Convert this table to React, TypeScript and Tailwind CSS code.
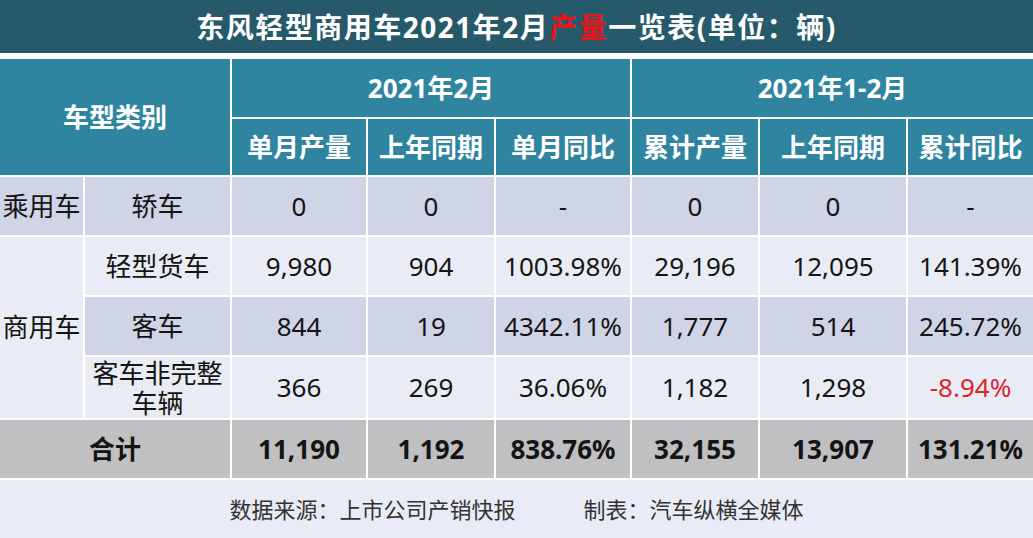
import React from "react";

// 东风轻型商用车 2021年2月 产量一览表

const font = "font-['Noto_Sans','Noto_Sans_CJK_SC',sans-serif]";

type Row = {
  name: string;
  values: string[];
  dark: boolean;
  wrap?: boolean;
};

const commercial: Row[] = [
  { name: "轻型货车", values: ["9,980", "904", "1003.98%", "29,196", "12,095", "141.39%"], dark: false },
  { name: "客车", values: ["844", "19", "4342.11%", "1,777", "514", "245.72%"], dark: true },
  { name: "客车非完整车辆", values: ["366", "269", "36.06%", "1,182", "1,298", "-8.94%"], dark: false, wrap: true },
];

const totals = ["11,190", "1,192", "838.76%", "32,155", "13,907", "131.21%"];

function Cell({
  children,
  className = "",
}: {
  children: React.ReactNode;
  className?: string;
}) {
  return (
    <div className={`flex items-center justify-center text-center ${className}`}>
      {children}
    </div>
  );
}

export default function App() {
  return (
    <div className={`w-[1033px] h-[538px] bg-white ${font}`}>
      {/* title */}
      <div className="h-[53px] bg-[#265a6b] flex items-center justify-center text-[28px] tracking-[1.5px] font-bold text-white">
        东风轻型商用车2021年2月<span className="text-[#e8141a]">产量</span>一览表(单位：辆)
      </div>

      <div
        className="mt-[6px] grid gap-[2px] bg-white text-[26px] text-[#141414]"
        style={{
          gridTemplateColumns: "83px 145px 134px 126px 134px 126px 146px 125px",
          gridTemplateRows: "58px 56px 58px 58px 58px 61px 58px",
        }}
      >
        {/* header */}
        <Cell className="col-span-2 row-span-2 bg-[#2f85a0] font-bold text-white">车型类别</Cell>
        <Cell className="col-span-3 bg-[#2f85a0] font-bold text-white">2021年2月</Cell>
        <Cell className="col-span-3 bg-[#2f85a0] font-bold text-white">2021年1-2月</Cell>
        {["单月产量", "上年同期", "单月同比", "累计产量", "上年同期", "累计同比"].map((h, i) => (
          <Cell key={i} className="bg-[#2f85a0] font-bold text-white">
            {h}
          </Cell>
        ))}

        {/* 乘用车 */}
        <Cell className="bg-[#cfd5e7] whitespace-nowrap">乘用车</Cell>
        <Cell className="bg-[#cfd5e7]">轿车</Cell>
        {["0", "0", "-", "0", "0", "-"].map((v, i) => (
          <Cell key={i} className="bg-[#cfd5e7]">
            {v}
          </Cell>
        ))}

        {/* 商用车 */}
        <Cell className="row-span-3 bg-[#e9ecf5] whitespace-nowrap">商用车</Cell>
        {commercial.map((r) => (
          <React.Fragment key={r.name}>
            <Cell
              className={`${r.dark ? "bg-[#cfd5e7]" : "bg-[#e9ecf5]"} ${
                r.wrap ? "pt-[1px] px-[6px] leading-[30px]" : ""
              }`}
            >
              {r.name}
            </Cell>
            {r.values.map((v, i) => (
              <Cell
                key={i}
                className={`${r.dark ? "bg-[#cfd5e7]" : "bg-[#e9ecf5]"} ${
                  v.startsWith("-") ? "text-[#d9262c]" : ""
                }`}
              >
                {v}
              </Cell>
            ))}
          </React.Fragment>
        ))}

        {/* 合计 */}
        <Cell className="col-span-2 bg-[#c0bfc2] font-bold">合计</Cell>
        {totals.map((v, i) => (
          <Cell key={i} className="bg-[#c0bfc2] font-bold">
            {v}
          </Cell>
        ))}
      </div>

      {/* footer */}
      <div className="mt-[2px] h-[58px] bg-[#e9ecf6] flex items-center justify-center gap-[68px] text-[22px] text-[#333333]">
        <span>数据来源：上市公司产销快报</span>
        <span>制表：汽车纵横全媒体</span>
      </div>
    </div>
  );
}
